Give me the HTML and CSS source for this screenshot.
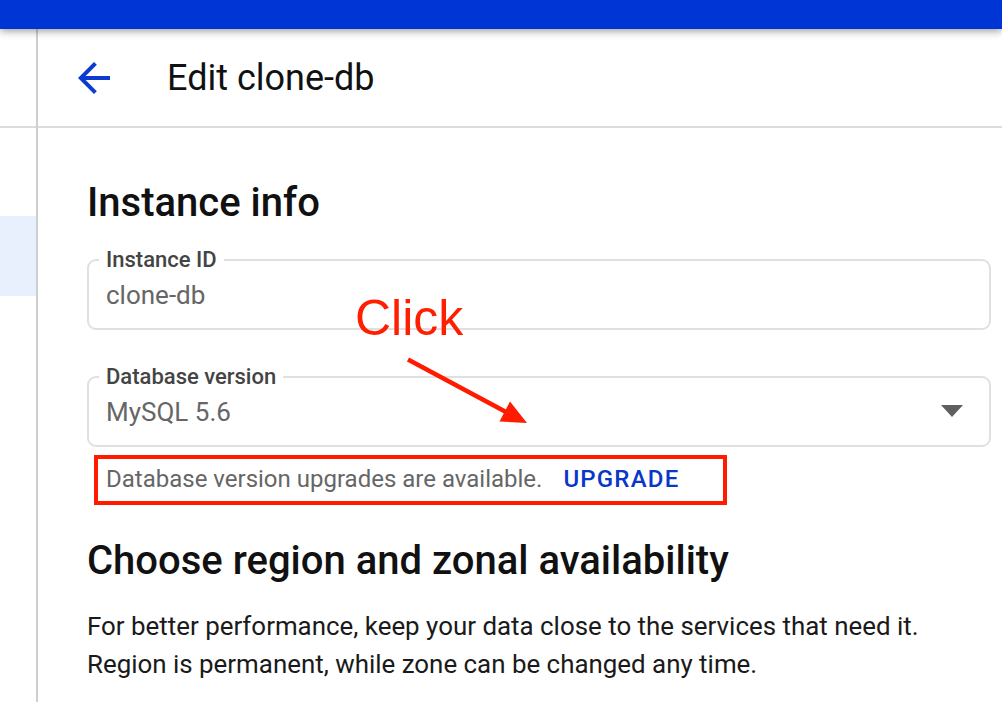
FILE: index.html
```html
<!DOCTYPE html>
<html lang="en">
<head>
<meta charset="utf-8">
<title>Edit clone-db</title>
<link rel="stylesheet" href="styles.css">
</head>
<body>
<div class="topbar"></div>
<div class="layout">
  <aside class="sidebar">
    <div class="sidebar-head"></div>
    <div class="sidebar-gap"></div>
    <div class="sidebar-active"></div>
  </aside>
  <main class="main">
    <header class="page-header">
      <svg class="back" viewBox="0 0 24 24" width="48" height="48" aria-hidden="true">
        <path d="M20 11H7.83l5.59-5.59L12 4l-8 8 8 8 1.41-1.41L7.83 13H20v-2z" fill="currentColor"/>
      </svg>
      <h1 class="title">Edit clone-db</h1>
    </header>
    <div class="content">
      <h2 class="section-title">Instance info</h2>
      <fieldset class="field">
        <legend class="field-label">Instance ID</legend>
        <div class="field-value">clone-db</div>
      </fieldset>
      <fieldset class="field field-select">
        <legend class="field-label">Database version</legend>
        <div class="field-row">
          <div class="field-value">MySQL 5.6</div>
          <span class="caret"></span>
        </div>
      </fieldset>
      <div class="hint">
        <span class="hint-text">Database version upgrades are available.</span>
        <a class="upgrade" href="#">UPGRADE</a>
      </div>
      <h2 class="section-title section-title-2">Choose region and zonal availability</h2>
      <p class="desc">For better performance, keep your data close to the services that need it.<br>Region is permanent, while zone can be changed any time.</p>

      <div class="note-box"></div>
      <div class="note-text">Click</div>
      <svg class="note-arrow" width="140" height="80" viewBox="0 0 140 80" aria-hidden="true">
        <line x1="8" y1="9.5" x2="106" y2="62" stroke="#ff1a00" stroke-width="4.5"/>
        <polygon points="127,73 99.5,71.5 110,51.5" fill="#ff1a00"/>
      </svg>
    </div>
  </main>
</div>
</body>
</html>
```

FILE: styles.css
```css
* { box-sizing: border-box; }

html, body {
  margin: 0;
  padding: 0;
  background: #ffffff;
  overflow: hidden;
}

body {
  font-family: Roboto, "Noto Sans", "Liberation Sans", sans-serif;
  color: #202124;
  width: 1002px;
  height: 702px;
}

.topbar {
  position: relative;
  z-index: 2;
  height: 29px;
  background: #0035d5;
  box-shadow: 0 2px 8px rgba(0, 0, 0, 0.4);
}

.layout {
  display: flex;
  height: 673px;
}

.sidebar {
  width: 38px;
  flex: 0 0 38px;
  border-right: 2px solid #cfcfcf;
  display: flex;
  flex-direction: column;
}

.sidebar-head {
  height: 99px;
  border-bottom: 2px solid #dcdcdc;
}

.sidebar-gap {
  height: 88px;
}

.sidebar-active {
  height: 80px;
  background: #e8f0fe;
}

.main {
  flex: 1;
  display: flex;
  flex-direction: column;
}

.page-header {
  height: 99px;
  border-bottom: 2px solid #dcdcdc;
  display: flex;
  align-items: center;
  padding-left: 32px;
}

.back {
  color: #0d3bd0;
  flex: 0 0 48px;
  margin-right: 49px;
}

.title {
  margin: 0;
  font-size: 36px;
  font-weight: 400;
  line-height: 44px;
  color: #111;
}

.content {
  position: relative;
  flex: 1;
  padding: 51px 11px 0 49px;
}

.section-title {
  margin: 0;
  font-size: 40px;
  font-weight: 500;
  line-height: 48px;
  color: #111;
}

.field {
  margin: 22px 0 0;
  border: 2px solid #e0e0e0;
  border-radius: 9px;
  padding: 0 26px 17px 10px;
  min-width: 0;
}

.field-select {
  margin-top: 36px;
}

.field-label {
  padding: 0 7px;
  font-size: 22px;
  font-weight: 500;
  line-height: 22px;
  color: #444;
}

.field-value {
  margin-top: 8px;
  padding-left: 7px;
  font-size: 26px;
  line-height: 32px;
  color: #666;
}

.field-row {
  display: flex;
  align-items: center;
  justify-content: space-between;
}

.caret {
  width: 0;
  height: 0;
  margin-top: 6px;
  border-left: 11px solid transparent;
  border-right: 11px solid transparent;
  border-top: 12px solid #5f5f5f;
}

.hint {
  margin-top: 17px;
  padding-left: 19px;
  display: flex;
  align-items: baseline;
  gap: 21px;
  line-height: 30px;
}

.hint-text {
  font-size: 24px;
  color: #666;
}

.upgrade {
  font-size: 24px;
  font-weight: 500;
  letter-spacing: 1.2px;
  color: #0b36c8;
  text-decoration: none;
}

.section-title-2 {
  margin-top: 43px;
}

.desc {
  margin: 22px 0 0;
  font-size: 25.9px;
  line-height: 38px;
  color: #1a1a1a;
}

/* annotation overlay */
.note-box {
  position: absolute;
  left: 56px;
  top: 327px;
  width: 633px;
  height: 50px;
  border: 4px solid #ff1a00;
}

.note-text {
  position: absolute;
  left: 317px;
  top: 165px;
  font-family: "Liberation Sans", Arial, sans-serif;
  font-size: 50px;
  line-height: 50px;
  color: #ff1f00;
}

.note-arrow {
  position: absolute;
  left: 362px;
  top: 222px;
}
```
